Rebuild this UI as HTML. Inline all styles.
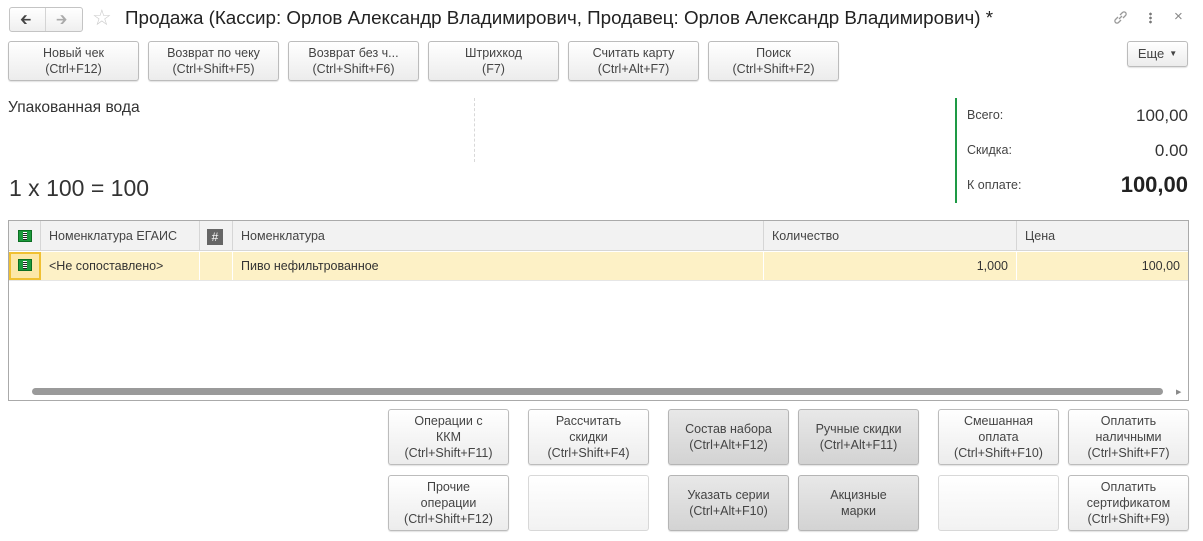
<!DOCTYPE html>
<html><head><meta charset="utf-8"><style>
*{box-sizing:border-box;margin:0;padding:0}
body{width:1203px;height:541px;background:#fff;font-family:"Liberation Sans",sans-serif;color:#333;position:relative;overflow:hidden}
.a{position:absolute}
.btn{position:absolute;border:1px solid #bcbcbc;border-radius:3px;background:linear-gradient(#fff,#ececec);box-shadow:0 1px 1px rgba(0,0,0,.12);font-size:12.5px;color:#444;text-align:center;display:flex;align-items:center;justify-content:center;line-height:16px}
.g{background:linear-gradient(#e8e8e8,#d3d3d3);border-color:#b5b5b5}
.e{background:linear-gradient(#fff,#f2f2f2);border-color:#d8d8d8;box-shadow:none}
.th{position:absolute;top:221px;height:30px;font-size:12.5px;color:#444;line-height:30px;padding-left:8px;border-right:1px solid #d6d6d6}
.td{position:absolute;top:252px;height:28px;font-size:12.5px;color:#333;line-height:28px;padding:0 8px;border-right:1px solid #fff}
.ic{position:absolute;width:14px;height:12px;background:#1c9a3c;border:1px solid #0c6e22}
.ic:after{content:"";position:absolute;left:4px;top:1px;width:4px;height:8px;background:repeating-linear-gradient(#fff 0 1px,#222 1px 2px)}
</style></head><body>
<div class="a" style="left:9px;top:7px;width:74px;height:25px;border:1px solid #c4c4c4;border-radius:3px;background:linear-gradient(#fff,#efefef)"></div>
<div class="a" style="left:45px;top:8px;width:1px;height:23px;background:#d4d4d4"></div>
<div class="a" style="left:20px;top:9px;font-size:14px;color:#444">&#129136;</div>
<div class="a" style="left:56px;top:9px;font-size:14px;color:#aaa">&#129138;</div>
<div class="a" style="left:92px;top:5px;font-size:22px;color:#ccc">☆</div>
<div class="a" style="left:125px;top:7px;font-size:18.8px;color:#222;white-space:nowrap">Продажа (Кассир: Орлов Александр Владимирович, Продавец: Орлов Александр Владимирович) *</div>
<svg class="a" style="left:1112px;top:9px" width="16" height="16" viewBox="0 0 16 16"><path d="M7 10 L10 7 M6 8 L3.5 10.5 a2 2 0 0 0 3 3 L9 11 M8 6 L10.5 3.5 a2 2 0 0 1 3 3 L11 9" stroke="#999" stroke-width="1.3" fill="none"/></svg>
<div class="a" style="left:1149px;top:12px;width:3px;height:12px;background:radial-gradient(circle,#777 1.2px,transparent 1.5px) 0 0/3px 4px"></div>
<div class="a" style="left:1174px;top:8px;font-size:15px;color:#888">×</div>

<div class="btn" style="left:8px;top:41px;width:131px;height:40px">Новый чек<br>(Ctrl+F12)</div>
<div class="btn" style="left:148px;top:41px;width:131px;height:40px">Возврат по чеку<br>(Ctrl+Shift+F5)</div>
<div class="btn" style="left:288px;top:41px;width:131px;height:40px">Возврат без ч...<br>(Ctrl+Shift+F6)</div>
<div class="btn" style="left:428px;top:41px;width:131px;height:40px">Штрихкод<br>(F7)</div>
<div class="btn" style="left:568px;top:41px;width:131px;height:40px">Считать карту<br>(Ctrl+Alt+F7)</div>
<div class="btn" style="left:708px;top:41px;width:131px;height:40px">Поиск<br>(Ctrl+Shift+F2)</div>
<div class="btn" style="left:1127px;top:41px;width:61px;height:26px;font-size:13px">Еще <span style="font-size:8px;margin-left:5px">▼</span></div>

<div class="a" style="left:8px;top:99px;font-size:15.6px;color:#333">Упакованная вода</div>
<div class="a" style="left:474px;top:98px;height:64px;border-left:1px dashed #d8d8d8"></div>
<div class="a" style="left:9px;top:175px;font-size:23px;color:#333">1 x 100 = 100</div>

<div class="a" style="left:955px;top:98px;width:2px;height:105px;background:#1e9a45"></div>
<div class="a" style="left:967px;top:108px;font-size:12.5px;color:#444">Всего:</div>
<div class="a" style="left:967px;top:143px;font-size:12.5px;color:#444">Скидка:</div>
<div class="a" style="left:967px;top:178px;font-size:12.5px;color:#444">К оплате:</div>
<div class="a" style="right:15px;top:106px;font-size:17px;color:#333">100,00</div>
<div class="a" style="right:15px;top:141px;font-size:17px;color:#333">0.00</div>
<div class="a" style="right:15px;top:172px;font-size:22px;font-weight:bold;color:#222">100,00</div>

<div class="a" style="left:8px;top:220px;width:1181px;height:181px;border:1px solid #aaa"></div>
<div class="a" style="left:9px;top:221px;width:1179px;height:30px;background:#f2f2f2;border-bottom:1px solid #d6d6d6"></div>
<div class="th" style="left:9px;width:32px"></div>
<div class="ic" style="left:18px;top:230px"></div>
<div class="th" style="left:41px;width:159px">Номенклатура ЕГАИС</div>
<div class="th" style="left:200px;width:33px"><span style="display:inline-block;width:16px;height:16px;background:#666;color:#fff;font-size:12px;line-height:16px;text-align:center;margin-left:-1px;vertical-align:middle">#</span></div>
<div class="th" style="left:233px;width:531px">Номенклатура</div>
<div class="th" style="left:764px;width:253px">Количество</div>
<div class="th" style="left:1017px;width:171px;border:none">Цена</div>
<div class="a" style="left:9px;top:252px;width:1179px;height:29px;background:#fdf1c6;border-bottom:1px solid #e6e6e6"></div>
<div class="a" style="left:9px;top:252px;width:32px;height:28px;border:2px solid #f0c032;background:#fce7a8"></div>
<div class="ic" style="left:18px;top:259px"></div>
<div class="td" style="left:41px;width:159px">&lt;Не сопоставлено&gt;</div>
<div class="td" style="left:200px;width:33px"></div>
<div class="td" style="left:233px;width:531px">Пиво нефильтрованное</div>
<div class="td" style="left:764px;width:253px;text-align:right">1,000</div>
<div class="td" style="left:1017px;width:171px;text-align:right;border:none">100,00</div>
<div class="a" style="left:32px;top:388px;width:1131px;height:7px;background:#9a9a9a;border-radius:4px"></div>
<div class="a" style="left:1176px;top:388px;font-size:7px;color:#888">▶</div>

<div class="btn" style="left:388px;top:409px;width:121px;height:56px">Операции с<br>ККМ<br>(Ctrl+Shift+F11)</div>
<div class="btn" style="left:528px;top:409px;width:121px;height:56px">Рассчитать<br>скидки<br>(Ctrl+Shift+F4)</div>
<div class="btn g" style="left:668px;top:409px;width:121px;height:56px">Состав набора<br>(Ctrl+Alt+F12)</div>
<div class="btn g" style="left:798px;top:409px;width:121px;height:56px">Ручные скидки<br>(Ctrl+Alt+F11)</div>
<div class="btn" style="left:938px;top:409px;width:121px;height:56px">Смешанная<br>оплата<br>(Ctrl+Shift+F10)</div>
<div class="btn" style="left:1068px;top:409px;width:121px;height:56px">Оплатить<br>наличными<br>(Ctrl+Shift+F7)</div>
<div class="btn" style="left:388px;top:475px;width:121px;height:56px">Прочие<br>операции<br>(Ctrl+Shift+F12)</div>
<div class="btn e" style="left:528px;top:475px;width:121px;height:56px"></div>
<div class="btn g" style="left:668px;top:475px;width:121px;height:56px">Указать серии<br>(Ctrl+Alt+F10)</div>
<div class="btn g" style="left:798px;top:475px;width:121px;height:56px">Акцизные<br>марки</div>
<div class="btn e" style="left:938px;top:475px;width:121px;height:56px"></div>
<div class="btn" style="left:1068px;top:475px;width:121px;height:56px">Оплатить<br>сертификатом<br>(Ctrl+Shift+F9)</div>
</body></html>
